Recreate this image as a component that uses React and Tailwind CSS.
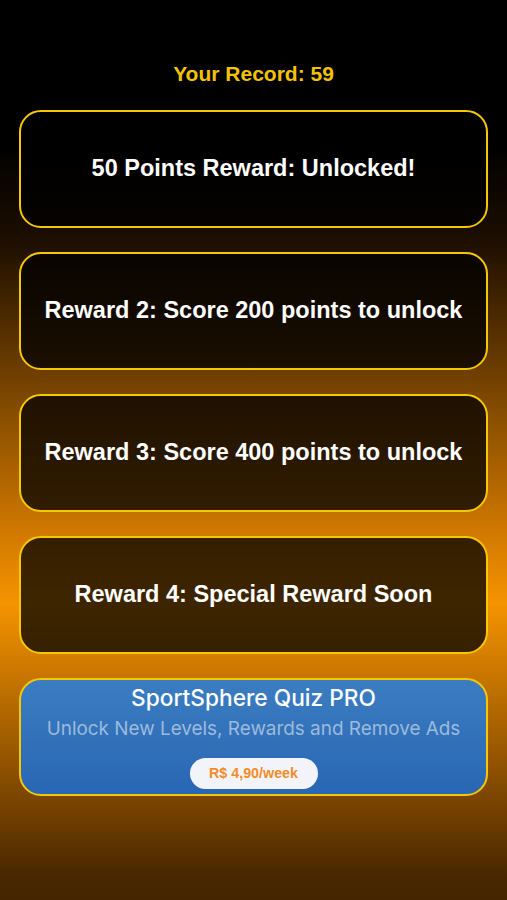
import React from "react";

const cards = [
  "50 Points Reward: Unlocked!",
  "Reward 2: Score 200 points to unlock",
  "Reward 3: Score 400 points to unlock",
  "Reward 4: Special Reward Soon",
];

export default function App() {
  return (
    <div className="w-full h-[900px] overflow-hidden bg-[linear-gradient(180deg,#000_0%,#000_16%,#1e0f00_27%,#d07800_59%,#f59300_67%,#7a4400_89%,#4a2800_97%,#442500_100%)] font-['Liberation_Sans',Arial,sans-serif]">
      <div className="pt-[61px] text-center text-[21px] leading-[26px] font-bold text-[#f4c300]">
        Your Record: 59
      </div>
      <div className="mt-[23px] mx-[19px] flex flex-col gap-[24px]">
        {cards.map((c) => (
          <div
            key={c}
            className="h-[118px] rounded-[22px] border-2 border-[#f5c800] bg-black/75 flex items-center justify-center text-white font-bold text-[23.5px]"
          >
            {c}
          </div>
        ))}
        <div className="h-[118px] rounded-[22px] border-2 border-[#f5c800] bg-[linear-gradient(180deg,#3b7dc1_0%,#2966b3_100%)] flex flex-col items-center pt-[4px] font-['Inter','Noto_Sans',sans-serif]">
          <div className="text-white text-[22.7px] leading-[28px] font-medium">
            SportSphere Quiz PRO
          </div>
          <div className="mt-[4px] text-[#9cbbdd] text-[18.9px] leading-[26px]">
            Unlock New Levels, Rewards and Remove Ads
          </div>
          <div className="mt-[16px] w-[128px] h-[31px] rounded-full bg-[#f3f4fa] flex items-center justify-center text-[#f28c28] font-bold text-[14.3px] font-['Liberation_Sans',Arial,sans-serif]">
            R$ 4,90/week
          </div>
        </div>
      </div>
    </div>
  );
}
